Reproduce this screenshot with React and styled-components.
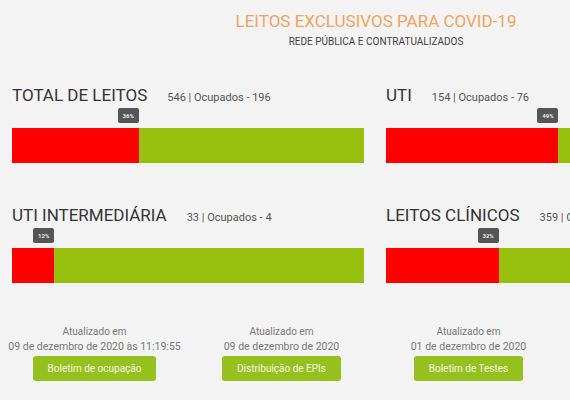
import React from 'react'
import styled, { createGlobalStyle } from 'styled-components'

const GlobalStyle = createGlobalStyle`
  html, body {
    margin: 0;
    padding: 0;
    background: #f3f3f3;
    overflow: hidden;
    font-family: Roboto, "Liberation Sans", Arial, sans-serif;
  }
`

const beds = [
  { title: 'TOTAL DE LEITOS', total: 546, busy: 196, pct: 36 },
  { title: 'UTI', total: 154, busy: 76, pct: 49 },
  { title: 'UTI INTERMEDIÁRIA', total: 33, busy: 4, pct: 12 },
  { title: 'LEITOS CLÍNICOS', total: 359, busy: 115, pct: 32 },
]

const updates = [
  { date: '09 de dezembro de 2020 às 11:19:55', label: 'Boletim de ocupação' },
  { date: '09 de dezembro de 2020', label: 'Distribuição de EPIs' },
  { date: '01 de dezembro de 2020', label: 'Boletim de Testes' },
]

const App = () => {
  return (
    <Page>
      <GlobalStyle />
      <Header>
        <Title>LEITOS EXCLUSIVOS PARA COVID-19</Title>
        <Subtitle>REDE PÚBLICA E CONTRATUALIZADOS</Subtitle>
      </Header>

      <Cards>
        {beds.map((b) => (
          <Card key={b.title}>
            <CardHead>
              <CardTitle>{b.title}</CardTitle>
              <CardCount>{b.total} | Ocupados - {b.busy}</CardCount>
            </CardHead>
            <Bar>
              <Filled style={{ width: `${b.pct}%` }}>
                <Badge>{b.pct}%</Badge>
              </Filled>
            </Bar>
          </Card>
        ))}
      </Cards>

      <Updates>
        {updates.map((u) => (
          <Update key={u.label}>
            <UpdateText>Atualizado em</UpdateText>
            <UpdateText $date>{u.date}</UpdateText>
            <Button>{u.label}</Button>
          </Update>
        ))}
      </Updates>
    </Page>
  )
}

export default App

const Page = styled.div`
  width: 1122px;
  padding-left: 1px;
`

/* ************************header */

const Header = styled.div`
  width: 750px;
  padding-top: 12px;
  text-align: center;
`

const Title = styled.h1`
  margin: 0;
  font-size: 17px;
  line-height: 19px;
  font-weight: 400;
  color: #eea55e;
`

const Subtitle = styled.h5`
  margin: 5px 0 0;
  font-size: 10px;
  line-height: 12px;
  font-weight: 400;
  color: #444;
`

/* ************************bars */

const Cards = styled.div`
  display: grid;
  grid-template-columns: repeat(2, 374px);
  row-gap: 42px;
  margin-top: 37px;
`

const Card = styled.div`
  padding: 0 11px;
`

const CardHead = styled.div`
  display: flex;
  align-items: baseline;
  gap: 20px;
  height: 20px;
`

const CardTitle = styled.h3`
  margin: 0;
  font-size: 17px;
  line-height: 20px;
  font-weight: 400;
  color: #333;
  white-space: nowrap;
`

const CardCount = styled.span`
  font-size: 11px;
  color: #555;
  white-space: nowrap;
`

const Bar = styled.div`
  margin-top: 23px;
  height: 35px;
  background: #97bf0d;
  display: flex;
`

const Filled = styled.div`
  position: relative;
  background: #ff0000;
`

const Badge = styled.span`
  position: absolute;
  right: 0;
  bottom: calc(100% + 5px);
  width: 21px;
  height: 15px;
  border-radius: 2px;
  background: #555;
  color: #eee;
  font-size: 6px;
  font-weight: 700;
  line-height: 15px;
  text-align: center;
`

/* ************************updates */

const Updates = styled.div`
  display: grid;
  grid-template-columns: repeat(6, 187px);
  margin-top: 41px;
`

const Update = styled.div`
  display: flex;
  flex-direction: column;
  align-items: center;
`

const UpdateText = styled.p`
  margin: 0;
  font-size: ${(p) => (p.$date ? '10.5px' : '10px')};
  line-height: 15px;
  color: #777;
  white-space: nowrap;
`

const Button = styled.a`
  margin-top: 2px;
  height: 25px;
  padding: 0 15px;
  border-radius: 3px;
  background: #95c11f;
  color: #f6fae6;
  font-size: 10px;
  line-height: 25px;
  white-space: nowrap;
`
